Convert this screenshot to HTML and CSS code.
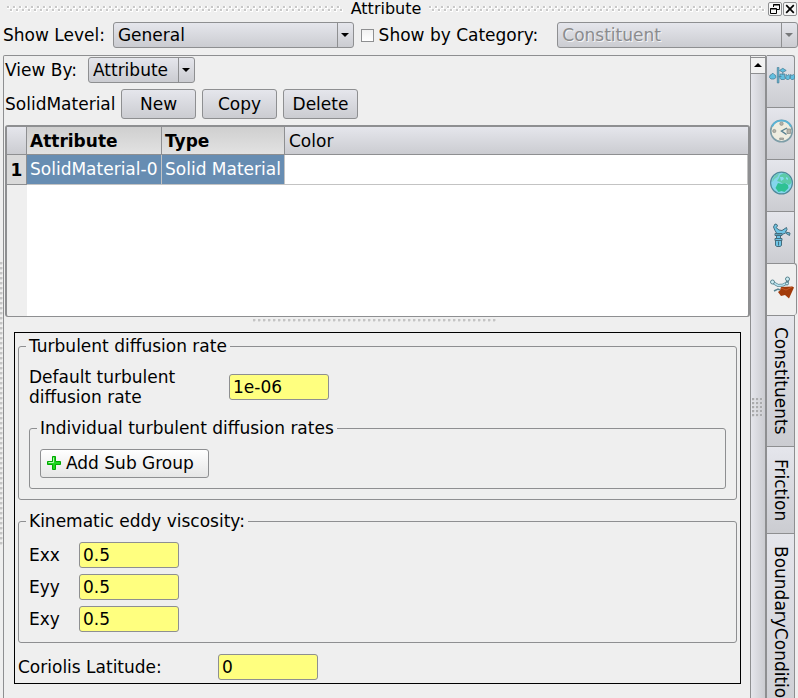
FILE: index.html
```html
<!DOCTYPE html>
<html lang="en">
<head>
<meta charset="utf-8">
<title>Attribute</title>
<link rel="stylesheet" href="styles.css">
</head>
<body>
<header class="titlebar">
  <span class="grip"></span>
  <h1>Attribute</h1>
  <span class="grip"></span>
  <button class="dock-btn" type="button" aria-label="Float">
    <svg width="12" height="12" viewBox="0 0 12 12" fill="none" stroke="#000"><path d="M4.5 4V1.5h6v5H8M4 2h7M1.5 5.5h6v5h-6zM1 6h7" /></svg>
  </button>
  <button class="dock-btn" type="button" aria-label="Close">
    <svg width="12" height="12" viewBox="0 0 12 12" fill="none" stroke="#000" stroke-width="1.7"><path d="M2.2 2.2l7.6 7.6M9.800 2.200l-7.600 7.600"/></svg>
  </button>
</header>

<div class="filters">
  <label for="level">Show Level:</label>
  <span class="combo wide"><select id="level"><option>General</option></select></span>
  <input class="check" type="checkbox" id="bycat">
  <label class="cat-label" for="bycat">Show by Category:</label>
  <span class="combo wide off"><select aria-label="Category" disabled><option>Constituent</option></select></span>
</div>

<main class="workspace">
  <div class="side-grip"></div>
  <section class="panel">
    <div class="view">
      <div class="row viewby">
        <label for="view">View By:</label>
        <span class="combo"><select id="view"><option>Attribute</option></select></span>
      </div>
      <div class="row actions">
        <span class="kind">SolidMaterial</span>
        <button class="btn" type="button">New</button>
        <button class="btn" type="button">Copy</button>
        <button class="btn" type="button">Delete</button>
      </div>
      <div class="grid-frame">
        <table>
          <colgroup><col class="c-num"><col class="c-attr"><col class="c-type"><col></colgroup>
          <thead><tr><td></td><th class="sel" scope="col">Attribute</th><th class="sel" scope="col">Type</th><th scope="col">Color</th></tr></thead>
          <tbody><tr><th scope="row">1</th><td class="sel">SolidMaterial-0</td><td class="sel">Solid Material</td><td></td></tr></tbody>
        </table>
      </div>
      <div class="splitter"><span></span></div>
      <form class="sheet">
        <fieldset class="turbulent">
          <legend>Turbulent diffusion rate</legend>
          <div class="field rate">
            <label for="rate">Default turbulent diffusion rate</label>
            <input id="rate" type="text" value="1e-06">
          </div>
          <fieldset class="individual">
            <legend>Individual turbulent diffusion rates</legend>
            <button class="btn add" type="button">
              <svg width="14" height="14" viewBox="0 0 14 14"><path d="M5.500.5h3v5h5v3h-5v5h-3v-5h-5v-3h5z" fill="#1fd51f" stroke="#00a800"/><path d="M6.500 1.500v5h-5" fill="none" stroke="#b4f7b4"/></svg>
              Add Sub Group
            </button>
          </fieldset>
        </fieldset>
        <fieldset class="eddy">
          <legend>Kinematic eddy viscosity:</legend>
          <div class="field"><label for="exx">Exx</label><input id="exx" type="text" value="0.5"></div>
          <div class="field"><label for="eyy">Eyy</label><input id="eyy" type="text" value="0.5"></div>
          <div class="field"><label for="exy">Exy</label><input id="exy" type="text" value="0.5"></div>
        </fieldset>
        <div class="field coriolis"><label for="lat">Coriolis Latitude:</label><input id="lat" type="text" value="0"></div>
      </form>
    </div>
    <div class="scroll">
      <button type="button" aria-label="Scroll up"></button>
      <div class="thumb"><span></span></div>
    </div>
  </section>
  <nav class="tabs">
    <button class="tab icon" type="button" aria-label="Functions">
      <svg width="28" height="24" viewBox="0 4 28 24" fill="#62bfe0" stroke="#4b8199" stroke-width=".8"><path d="M2.500 14.500q0-3 2-3l1.200-1.500 1.300 1.500q2 0 2 3l-2 1.500h-3z"/><path d="M10.300 4.400h1.600v15.500h-1.600z"/><path d="M12.500 7.500l3.300-2.200 3.400 2.200-3.400 1.800z"/><path d="M13 11h5l-.5 2 1 2.500-1.500 1h-3l-1.200-1.500zM19 11.500l1.500 1 1.500-1 .9 1v3l-1.400 1h-1.500l-1.300-1zM23.500 11.500l1.500 1 1.500-1 1 1v3l-1.500 1h-1.500l-1.200-1z"/><path d="M15.800 9v3M11.500 13.500h3" fill="none"/></svg>
    </button>
    <button class="tab icon" type="button" aria-label="Time">
      <svg width="28" height="24" viewBox="0 0 28 24"><circle cx="14.500" cy="12" r="10.800" fill="#efede0" stroke="#7d9da7" stroke-width="1.600"/><path d="M5.100 7.500a10.400 10.400 0 0 1 18.800 0" fill="none" stroke="#58b4d7" stroke-width="1.800"/><g fill="#b5b4a9" stroke="#898c87" stroke-width=".7"><circle cx="14.500" cy="4.700" r="1.700"/><circle cx="7.300" cy="12" r="1.600"/><path d="M12.700 19h3.800v1.500h-3.800zM20 10h3.500v4.500H20z"/></g><path d="M20 9l-5.500 3 5 3.500" fill="none" stroke="#557f8f" stroke-width="1.400"/></svg>
    </button>
    <button class="tab icon" type="button" aria-label="Globe">
      <svg width="28" height="24" viewBox="0 0 28 24"><circle cx="14.500" cy="12" r="10.900" fill="#84d5ec" stroke="#50899a" stroke-width="1.200"/><path d="M13 4l4-2 4 2 3 4 .5 4-2.500 2-3-2-3 1-3-2-3-1 2-3z" fill="#5ccba8"/><path d="M11 12l4 1 3-1 3 2 .5 3-4 4-3-1-3 1-3-4z" fill="#2fc193"/><path d="M5.500 8l3-4 4-2-2 4-3 2-2 3z" fill="#6fcdb4"/><path d="M13 6l3 0 1 2-3 2zM19 6l2 1 0 2-2-1z" fill="#84dcef"/></svg>
    </button>
    <button class="tab icon" type="button" aria-label="Hydraulics">
      <svg width="28" height="24" viewBox="0 0 28 24" fill="#6ec4e5" stroke="#446c7c" stroke-width="1"><path d="M8 1q2.500 0 2.500 2L9 4.500 12 7l3 .5 4.500-3 .5 2-1.500 2.500L23 10l-.5 2.500-4-2.500-3.500 1.500-4 1L8 7.500 6.500 4z"/><path d="M9.500 12h4v3.500h-4zM8 10.500h7v2H8zM8 15.500h7v2H8zM8.500 17.500h6v5l-1.500 1h-3l-1.500-1z"/><path d="M11.500 18.500v4" fill="none"/></svg>
    </button>
    <button class="tab icon current" type="button" aria-label="Materials">
      <svg width="28" height="24" viewBox="0 0 28 24"><path d="M6 7.500l5 3 5-.5 4-2 1-4" fill="none" stroke="#5b8591" stroke-width="3" stroke-linecap="round"/><path d="M6 7.500l5 3 5-.5 4-2" fill="none" stroke="#b7e2ef" stroke-width="1.500"/><g fill="#ccecf3" stroke="#5b8591"><circle cx="5.500" cy="7" r="2"/><circle cx="20.500" cy="4" r="2"/><circle cx="20" cy="8.500" r="1.500"/></g><path d="M14 12l11.500-.5 1.500 1-5 11-4-3.500-4 1-3-4 2-1.500z" fill="#a23a0a"/><path d="M7 16l4-2 2 1" fill="none" stroke="#5b8591" stroke-width="1.400"/><path d="M14 13l5 2 6-3" fill="none" stroke="#c65a27"/></svg>
    </button>
    <button class="tab text long" type="button">Constituents</button>
    <button class="tab text short" type="button">Friction</button>
    <button class="tab text rest" type="button">BoundaryConditions</button>
  </nav>
</main>
</body>
</html>
```

FILE: styles.css
```css
:root {
  --bg: #efefef;
  --line: #8e8f91;
  --face: linear-gradient(#e5e6ec, #cbccd1);
  --dot: #c4c4c4;
}

* { box-sizing: border-box; }

body {
  margin: 0;
  height: 100vh;
  overflow: hidden;
  display: flex;
  flex-direction: column;
  background: var(--bg);
  color: #000;
  font: 17px/20px "DejaVu Sans", sans-serif;
}

button, input, select { font: inherit; color: inherit; margin: 0; }

label, .row span { white-space: nowrap; }

/* Title bar */
.titlebar {
  display: flex;
  align-items: center;
  height: 18px;
  padding: 0 1px 0 7px;
}

.titlebar h1 { margin: 0 8px; font: 16px/18px "DejaVu Sans", sans-serif; }

/* Two staggered rows of embossed dots */
.grip {
  flex: 1;
  height: 6px;
  background:
    linear-gradient(#c8c8c8, #c8c8c8) 0 0 / 2px 2px,
    linear-gradient(var(--bg), var(--bg));
  background:
    conic-gradient(from 270deg at 2px 2px, #c8c8c8 25%, transparent 0) 0 0 / 6px 6px,
    conic-gradient(from 270deg at 2px 2px, #c8c8c8 25%, transparent 0) 3px 3px / 6px 6px,
    conic-gradient(from 270deg at 3px 3px, #fff 25%, transparent 0) 0 0 / 6px 6px,
    conic-gradient(from 270deg at 3px 3px, #fff 25%, transparent 0) 3px 3px / 6px 6px;
}

.grip + .dock-btn { margin-left: 3px; }

.dock-btn {
  display: flex;
  align-items: center;
  justify-content: center;
  width: 14px;
  height: 14px;
  margin-left: 1px;
  padding: 0;
  border: 1px solid var(--line);
  border-radius: 2px;
  background: #f6f6f6;
}

/* Filter row */
.filters {
  display: flex;
  align-items: center;
  height: 26px;
  margin: 4px 0 7px;
  padding-left: 3px;
}

.filters label { margin-right: 8px; }
.filters .cat-label { margin: 0 19px 0 5px; }

.combo { position: relative; display: inline-flex; }
.combo.wide { flex: 1; }

.combo select {
  appearance: none;
  width: 100%;
  height: 26px;
  padding: 0 24px 0 4px;
  border: 1px solid var(--line);
  border-radius: 3px;
  background: var(--face);
}

.combo::before,
.combo::after { content: ""; position: absolute; pointer-events: none; }
.combo::before { right: 16px; top: 1px; bottom: 1px; width: 1px; background: var(--line); }
.combo::after {
  right: 5px;
  top: 11px;
  border: 4px solid transparent;
  border-top-color: #000;
  border-bottom: 0;
}

.combo.off select { color: #8b8c8e; opacity: 1; text-shadow: 1px 1px #f4f4f6; }
.combo.off::after { border-top-color: #77787a; }

.check {
  appearance: none;
  width: 13px;
  height: 13px;
  margin-left: 7px;
  border: 1px solid var(--line);
  background: linear-gradient(#f1f1f1, #fff);
}

/* Workspace */
.workspace { flex: 1; min-height: 0; display: flex; }

.side-grip {
  width: 3px;
  margin: 207px 0 151px;
  background: radial-gradient(circle at 1px 1px, var(--dot) 1px, transparent 2px) 0 0 / 3px 5px;
}

.panel {
  flex: 1;
  min-width: 0;
  display: flex;
  border: 1px solid var(--line);
  border-bottom: 0;
  border-right-width: 2px;
  border-radius: 2px 2px 0 0;
}

.view { flex: 1; min-width: 0; padding: 1px 0 0 1px; }

.row { display: flex; align-items: center; }
.viewby { height: 26px; gap: 11px; }
.viewby .combo { width: 107px; }
.actions { margin: 6px 0; gap: 6px; }
.kind { width: 110px; }

.btn {
  height: 30px;
  min-width: 75px;
  padding: 0 6px;
  border: 1px solid var(--line);
  border-radius: 3px;
  background: var(--face);
}

/* Attribute table */
.grid-frame {
  height: 192px;
  border: 2px solid var(--line);
  border-bottom-width: 1px;
  border-radius: 3px;
  background: linear-gradient(90deg, var(--bg) 20px, #fff 20px);
}

table { width: 100%; table-layout: fixed; border-collapse: separate; border-spacing: 0; }
.c-num { width: 20px; }
.c-attr { width: 135px; }
.c-type { width: 123px; }

th, td { padding: 0 3px; text-align: left; white-space: nowrap; }

thead td, thead th {
  height: 28px;
  border-right: 1px solid var(--line);
  border-bottom: 1px solid var(--line);
  background: var(--face);
  font-weight: normal;
}
thead th:last-child { border-right: 0; padding-left: 4px; }
thead th.sel { background: linear-gradient(#cfcfcf, #e2e2e2); font-weight: bold; }

tbody th, tbody td { height: 30px; padding-bottom: 1px; border-right: 1px solid #c3c3c3; border-bottom: 1px solid #c3c3c3; background: #fff; }
tbody th { padding: 0; border-color: var(--line); background: #dadada; text-align: center; }
tbody td.sel { background: #678db2; color: #fff; }

.splitter { height: 15px; padding: 2px 6px 0 0; }
.splitter span {
  display: block;
  width: 243px;
  height: 3px;
  margin: 0 auto;
  background: radial-gradient(circle at 1px 1px, var(--dot) 1px, transparent 2px) 0 0 / 5px 3px;
}

/* Attribute form */
.sheet { margin: 0 9px; padding: 3px; border: 1px solid #000; }

fieldset {
  min-width: 0;
  margin: 0;
  padding: 0 10px 10px;
  border: 1px solid var(--line);
  border-radius: 3px;
}
legend { margin-left: -3px; padding: 0 3px; }

.field { display: flex; align-items: center; }
.field input {
  width: 100px;
  height: 26px;
  padding: 0 3px;
  border: 1px solid var(--line);
  border-radius: 3px;
  background: #ffff7f;
}

.rate { margin: 11px 0; }
.rate label { width: 160px; margin-right: 40px; white-space: normal; }

.individual { padding-top: 11px; }
.individual .btn { display: flex; align-items: center; gap: 5px; }
.add { width: 169px; height: 29px; padding-bottom: 1px; background: linear-gradient(#fff, #e6e6e6); }

.eddy { margin: 11px 0; }
.eddy .field { margin-top: 6px; }
.eddy legend + .field { margin-top: 11px; }
.eddy label { width: 50px; }

.coriolis label { width: 200px; }

/* Scroll bar */
.scroll { width: 15px; display: flex; flex-direction: column; border-left: 1px solid var(--line); }
.scroll button {
  display: flex;
  align-items: center;
  justify-content: center;
  height: 17px;
  margin-top: 1px;
  padding: 0 0 2px;
  border: 0;
  border-top: 1px solid var(--line);
  border-bottom: 1px solid var(--line);
  background: #f2f2f2;
}
.scroll button::before { content: ""; border: 4px solid transparent; border-bottom-color: #000; border-top: 0; }
.thumb {
  flex: 1;
  display: flex;
  justify-content: center;
  align-items: center;
  background: linear-gradient(90deg, #e5e6ec, #cbccd1);
}
.thumb span {
  width: 12px;
  height: 20px;
  margin-top: 43px;
  background: radial-gradient(circle at 1px 1px, #aaabad 1px, #f3f3f6 2px, transparent 2px) 0 0 / 4px 4px;
}

/* Tabs */
.tabs { width: 31px; overflow: hidden; }

.tab {
  display: flex;
  align-items: center;
  justify-content: center;
  width: 28px;
  padding: 0;
  border: 1px solid var(--line);
  border-left: 0;
  border-bottom: 0;
  background: var(--face);
}
.tab:first-child { border-radius: 0 3px 0 0; }
.icon { height: 52px; padding-bottom: 5px; }
.icon svg { flex: none; }
.current { width: 30px; padding-right: 2px; border-radius: 0 3px 3px 0; background: var(--bg); }
.text { writing-mode: vertical-rl; white-space: nowrap; }
.long { height: 131px; }
.short { height: 87px; }
.rest { height: 196px; }
```
